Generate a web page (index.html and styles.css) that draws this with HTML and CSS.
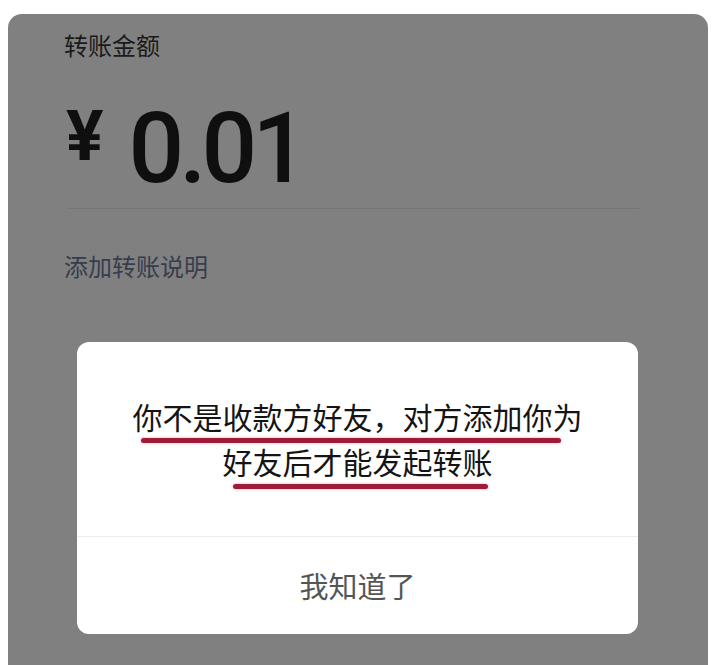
FILE: index.html
```html
<!DOCTYPE html>
<html lang="zh-CN">
<head>
<meta charset="utf-8">
<title>转账</title>
<link rel="stylesheet" href="styles.css">
</head>
<body>
<div class="sheet">
  <div class="label">转账金额</div>
  <div class="amount">
    <span class="yen">¥</span>
    <span class="value">0.01</span>
  </div>
  <div class="divider"></div>
  <div class="note">添加转账说明</div>

  <div class="dialog">
    <div class="message">
      <span class="line l1">你不是收款方好友，对方添加你为</span>
      <span class="line l2">好友后才能发起转账</span>
    </div>
    <div class="action">我知道了</div>
  </div>
</div>
</body>
</html>
```

FILE: styles.css
```css
html, body {
  margin: 0;
  padding: 0;
  background: #ffffff;
}

body {
  font-family: "Noto Sans CJK SC", "Noto Sans", sans-serif;
  width: 720px;
  height: 665px;
  overflow: hidden;
}

.sheet {
  position: relative;
  margin: 14px 0 0 8px;
  width: 700px;
  height: 651px;
  background: #808080;
  border-radius: 14px 14px 0 0;
  padding: 19px 0 0 56px;
  box-sizing: border-box;
}

.label {
  font-size: 24px;
  line-height: 24px;
  color: #1a1a1a;
}

.amount {
  display: flex;
  align-items: flex-start;
  margin-top: 43px;
  height: 98px;
  color: #0f0f0f;
}

.yen {
  font-family: Roboto, "Liberation Sans", sans-serif;
  font-weight: 700;
  font-size: 70px;
  line-height: 70px;
  margin-top: 1px;
  margin-left: 2px;
}

.value {
  font-family: Roboto, "Liberation Sans", sans-serif;
  font-weight: 500;
  font-size: 98px;
  line-height: 98px;
  margin-left: 25px;
  letter-spacing: -5px;
}

.divider {
  margin: 10px 0 0 4px;
  width: 571px;
  height: 1px;
  background: #757575;
}

.note {
  margin-top: 45px;
  font-size: 24px;
  line-height: 24px;
  color: #363d4e;
}

.dialog {
  position: absolute;
  left: 69px;
  top: 328px;
  width: 561px;
  height: 292px;
  background: #ffffff;
  border-radius: 12px;
  display: flex;
  flex-direction: column;
}

.message {
  padding: 52px 0 0;
  height: 195px;
  box-sizing: border-box;
  display: flex;
  flex-direction: column;
  align-items: center;
  border-bottom: 1px solid #ececec;
}

.line {
  position: relative;
  display: block;
  font-size: 30px;
  line-height: 45px;
  color: #141414;
}

.line::after {
  content: "";
  position: absolute;
  height: 5px;
  border-radius: 3px;
  background: #a01a3a;
  box-shadow: 0 0 3px rgba(225, 80, 110, 0.55);
}

.l1::after {
  left: 8px;
  right: 22px;
  bottom: -4px;
}

.l2::after {
  left: 10px;
  right: 5px;
  bottom: -5px;
}

.action {
  flex: 1;
  display: flex;
  align-items: center;
  justify-content: center;
  font-size: 29px;
  color: #555555;
  padding-bottom: 2px;
}
```
